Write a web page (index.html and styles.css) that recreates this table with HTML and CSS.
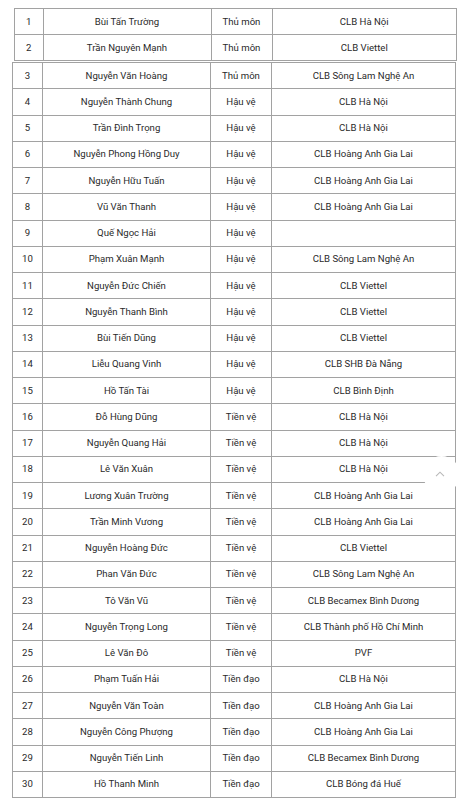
FILE: index.html
```html
<!DOCTYPE html>
<html lang="vi">
<head>
<meta charset="utf-8">
<title>Danh sách cầu thủ</title>
<link rel="stylesheet" href="styles.css">
</head>
<body>
<table class="tbl tbl-a">
  <colgroup><col class="c1"><col class="c2"><col class="c3"><col class="c4"></colgroup>
  <tr><td>1</td><td>Bùi Tấn Trường</td><td>Thủ môn</td><td>CLB Hà Nội</td></tr>
  <tr><td>2</td><td>Trần Nguyên Mạnh</td><td>Thủ môn</td><td>CLB Viettel</td></tr>
</table>
<table class="tbl tbl-b">
  <colgroup><col class="c1"><col class="c2"><col class="c3"><col class="c4"></colgroup>
  <tr><td>3</td><td>Nguyễn Văn Hoàng</td><td>Thủ môn</td><td>CLB Sông Lam Nghệ An</td></tr>
  <tr><td>4</td><td>Nguyễn Thành Chung</td><td>Hậu vệ</td><td>CLB Hà Nội</td></tr>
  <tr><td>5</td><td>Trần Đình Trọng</td><td>Hậu vệ</td><td>CLB Hà Nội</td></tr>
  <tr><td>6</td><td>Nguyễn Phong Hồng Duy</td><td>Hậu vệ</td><td>CLB Hoàng Anh Gia Lai</td></tr>
  <tr><td>7</td><td>Nguyễn Hữu Tuấn</td><td>Hậu vệ</td><td>CLB Hoàng Anh Gia Lai</td></tr>
  <tr><td>8</td><td>Vũ Văn Thanh</td><td>Hậu vệ</td><td>CLB Hoàng Anh Gia Lai</td></tr>
  <tr><td>9</td><td>Quế Ngọc Hải</td><td>Hậu vệ</td><td></td></tr>
  <tr><td>10</td><td>Phạm Xuân Mạnh</td><td>Hậu vệ</td><td>CLB Sông Lam Nghệ An</td></tr>
  <tr><td>11</td><td>Nguyễn Đức Chiến</td><td>Hậu vệ</td><td>CLB Viettel</td></tr>
  <tr><td>12</td><td>Nguyễn Thanh Bình</td><td>Hậu vệ</td><td>CLB Viettel</td></tr>
  <tr><td>13</td><td>Bùi Tiến Dũng</td><td>Hậu vệ</td><td>CLB Viettel</td></tr>
  <tr><td>14</td><td>Liễu Quang Vinh</td><td>Hậu vệ</td><td>CLB SHB Đà Nẵng</td></tr>
  <tr><td>15</td><td>Hồ Tấn Tài</td><td>Hậu vệ</td><td>CLB Bình Định</td></tr>
  <tr><td>16</td><td>Đỗ Hùng Dũng</td><td>Tiền vệ</td><td>CLB Hà Nội</td></tr>
  <tr><td>17</td><td>Nguyễn Quang Hải</td><td>Tiền vệ</td><td>CLB Hà Nội</td></tr>
  <tr><td>18</td><td>Lê Văn Xuân</td><td>Tiền vệ</td><td>CLB Hà Nội</td></tr>
  <tr><td>19</td><td>Lương Xuân Trường</td><td>Tiền vệ</td><td>CLB Hoàng Anh Gia Lai</td></tr>
  <tr><td>20</td><td>Trần Minh Vương</td><td>Tiền vệ</td><td>CLB Hoàng Anh Gia Lai</td></tr>
  <tr><td>21</td><td>Nguyễn Hoàng Đức</td><td>Tiền vệ</td><td>CLB Viettel</td></tr>
  <tr><td>22</td><td>Phan Văn Đức</td><td>Tiền vệ</td><td>CLB Sông Lam Nghệ An</td></tr>
  <tr><td>23</td><td>Tô Văn Vũ</td><td>Tiền vệ</td><td>CLB Becamex Bình Dương</td></tr>
  <tr><td>24</td><td>Nguyễn Trọng Long</td><td>Tiền vệ</td><td>CLB Thành phố Hồ Chí Minh</td></tr>
  <tr><td>25</td><td>Lê Văn Đô</td><td>Tiền vệ</td><td>PVF</td></tr>
  <tr><td>26</td><td>Phạm Tuấn Hải</td><td>Tiền đạo</td><td>CLB Hà Nội</td></tr>
  <tr><td>27</td><td>Nguyễn Văn Toàn</td><td>Tiền đạo</td><td>CLB Hoàng Anh Gia Lai</td></tr>
  <tr><td>28</td><td>Nguyễn Công Phượng</td><td>Tiền đạo</td><td>CLB Hoàng Anh Gia Lai</td></tr>
  <tr><td>29</td><td>Nguyễn Tiến Linh</td><td>Tiền đạo</td><td>CLB Becamex Bình Dương</td></tr>
  <tr><td>30</td><td>Hồ Thanh Minh</td><td>Tiền đạo</td><td>CLB Bóng đá Huế</td></tr>
</table>
<button class="to-top" aria-label="Lên đầu trang">
  <svg width="10" height="6" viewBox="0 0 10 6"><path d="M1 5.2 L5 1.2 L9 5.2" fill="none" stroke="#b8b8b8" stroke-width="1.1"/></svg>
</button>
</body>
</html>
```

FILE: styles.css
```css
html, body {
  margin: 0;
  padding: 0;
  background: #ffffff;
}
body {
  font-family: Roboto, "Noto Sans", "Liberation Sans", sans-serif;
  font-size: 9.6px;
  color: #2a2a2a;
  position: relative;
  width: 469px;
  height: 800px;
  overflow: hidden;
}
.tbl {
  border-collapse: collapse;
  table-layout: fixed;
}
.tbl td {
  border: 1px solid #a2a2a2;
  padding: 0;
  text-align: center;
  vertical-align: middle;
  white-space: nowrap;
  line-height: 12px;
}
.tbl-a {
  margin: 8px 0 0 14px;
  width: 442px;
}
.tbl-a tr { height: 26px; }
.tbl-a .c1 { width: 28.5px; }
.tbl-a .c2 { width: 168px; }
.tbl-a .c3 { width: 61px; }
.tbl-a .c4 { width: 184.5px; }
.tbl-b {
  margin: 1px 0 0 12px;
  width: 443px;
}
.tbl-b tr { height: 26.25px; }
.tbl-b .c1 { width: 30px; }
.tbl-b .c2 { width: 168px; }
.tbl-b .c3 { width: 61px; }
.tbl-b .c4 { width: 184px; }
.to-top {
  position: absolute;
  left: 423px;
  top: 456px;
  width: 37px;
  height: 37px;
  border-radius: 50%;
  border: 0;
  padding: 0;
  background: #ffffff;
  display: flex;
  align-items: center;
  justify-content: center;
}
.to-top svg { display: block; margin-top: -1px; margin-left: -4px; }
```
